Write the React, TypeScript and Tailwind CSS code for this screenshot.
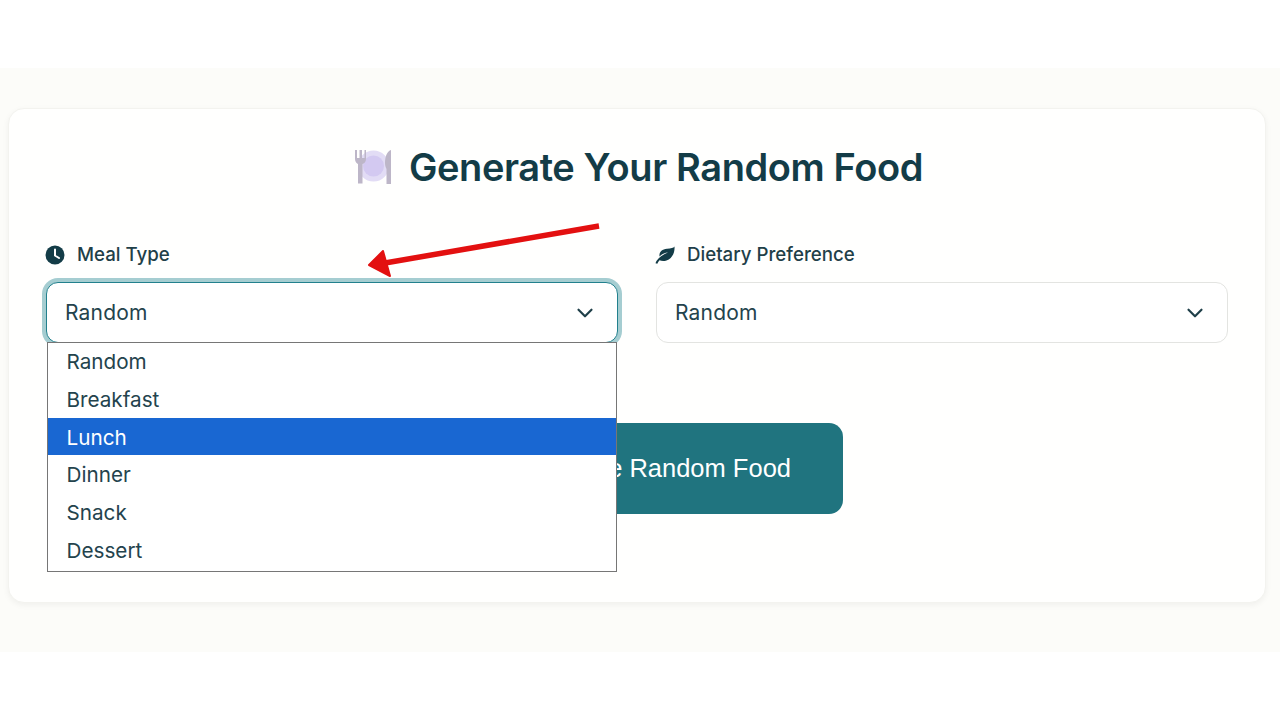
import { ChevronDown } from "lucide-react";

const font = "font-['Inter','Liberation_Sans',sans-serif]";
const options = ["Random", "Breakfast", "Lunch", "Dinner", "Snack", "Dessert"];

function PlateIcon() {
  return (
    <svg width="39" height="36" viewBox="0 0 39 36" className="shrink-0">
      <circle cx="19.500" cy="17" r="15.500" fill="#e2dcf5" />
      <circle cx="19.500" cy="17" r="10.500" fill="#d3c9f1" />
      <path d="M1 1v9c0 3 2 4.500 3 5L4 34.500h4.500L8.500 15C10 14.500 12 13 12 10V1h-1.500v8H8V1H5.500v8H3V1z" fill="#bdb6c8" />
      <path d="M32.500 35h4.500V1c-3.500 1-6 6-6 13 0 3 1 5 1.500 6z" fill="#bdb6c8" />
    </svg>
  );
}

function ClockIcon() {
  return (
    <svg width="20" height="20" viewBox="0 0 20 20" className="shrink-0">
      <circle cx="10" cy="10" r="9.500" fill="#133C47" />
      <path d="M10 4.500V10.500L14 13" stroke="#fff" strokeWidth="2" fill="none" strokeLinecap="round" />
    </svg>
  );
}

function LeafIcon() {
  return (
    <svg width="20" height="18" viewBox="0 0 20 18" className="shrink-0">
      <path d="M19.500 0.500C18.500 2 16 2.500 12 2.800 7 3.200 4 6 4.500 10.500 7 8 10 6.800 13 6.500 9.500 8 6 10 3.500 12.500 2 14 1 15.500 0.500 17.300L2.300 17.800C2.800 16.400 3.500 15.200 4.500 14.200 6.500 15.200 9 15.300 11.500 14.500 17.500 12.500 20 6 19.500 0.500Z" fill="#133C47" />
    </svg>
  );
}

function Field({ icon, label, focused, children }: { icon: React.ReactNode; label: string; focused?: boolean; children?: React.ReactNode }) {
  return (
    <div className="relative flex flex-col">
      <div className="flex items-center gap-3 h-[24px] mb-[15px] -ml-px">
        {icon}
        <span className="text-[18.700px] leading-[24px] font-medium text-[#1f3f49]">{label}</span>
      </div>
      <div
        className={
          focused
            ? "flex items-center justify-between h-[61px] rounded-[12px] bg-white border border-[#21808d] shadow-[0_0_0_4px_#a5cdd1] pl-[18px] pr-[19px]"
            : "flex items-center justify-between h-[61px] rounded-[12px] bg-white border border-[#e3e4e1] pl-[18px] pr-[19px]"
        }
      >
        <span className="text-[21px] tracking-[0.2px] text-[#24434d]">Random</span>
        <ChevronDown size={26} strokeWidth={2} className="text-[#1f3f49]" />
      </div>
      {children}
    </div>
  );
}

export default function App() {
  return (
    <div className={`relative min-h-[720px] bg-white pt-[68px] ${font}`}>
      <div className="bg-[#fcfcf9] pt-[40px] pb-[49px] pl-[8px] pr-[14px]">
        <div className="rounded-[16px] bg-[#fffffe] border border-[#f3f3ef] shadow-[0_2px_6px_rgba(0,0,0,0.05)] pt-[37px] pl-[37px] pr-[37px] h-[495px]">
          <div className="flex items-center justify-center gap-[16px] h-[42px] pl-[3px]">
            <PlateIcon />
            <h1 className="text-[38px] leading-[42px] font-semibold tracking-[-0.4px] text-[#133c47]">Generate Your Random Food</h1>
          </div>
          <div className="grid grid-cols-2 gap-[38px] mt-[55px]">
            <Field icon={<ClockIcon />} label="Meal Type" focused>
              <div className="absolute z-10 left-[1px] top-[99px] w-[570px] h-[230px] bg-white border border-[#767676]">
                <div className="-mt-px">
                  {options.map((o) => (
                    <div
                      key={o}
                      className={
                        o === "Lunch"
                          ? "h-[37.800px] leading-[40px] pl-[18.500px] text-[20.700px] bg-[#1967d2] text-white"
                          : "h-[37.800px] leading-[40px] pl-[18.500px] text-[20.700px] text-[#24434d]"
                      }
                    >
                      {o}
                    </div>
                  ))}
                </div>
              </div>
            </Field>
            <Field icon={<LeafIcon />} label="Dietary Preference" />
          </div>
          <div className="flex justify-center mt-[80px]">
            <button className="h-[91px] w-[411px] rounded-[14px] bg-[#20747f] text-white text-[25.500px] font-['Liberation_Sans',sans-serif] flex items-center justify-center pl-[33px]">
              Generate Random Food
            </button>
          </div>
        </div>
      </div>
      <svg className="absolute left-[360px] top-[218px] pointer-events-none" width="250" height="60" viewBox="360 218 250 60">
        <path d="M599 226L385 263" stroke="#e31010" strokeWidth="5.500" fill="none" />
        <path d="M369 265L383 251L390 276Z" fill="#e31010" stroke="#e31010" strokeWidth="2" strokeLinejoin="round" />
      </svg>
    </div>
  );
}
